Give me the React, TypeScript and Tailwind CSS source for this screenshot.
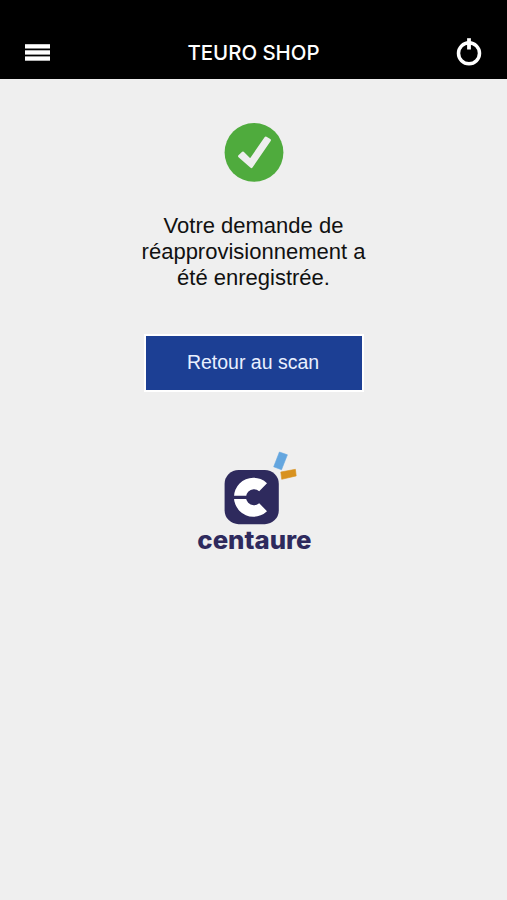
const MenuIcon: React.FC = () => (
  <svg viewBox="0 0 25 17" className="w-[25px] h-[17px]" fill="#fff">
    <rect x="0" y="0.2" width="25" height="4.3" />
    <rect x="0" y="6.3" width="25" height="4.3" />
    <rect x="0" y="12.4" width="25" height="4.3" />
  </svg>
);

const PowerIcon: React.FC = () => (
  <svg viewBox="0 0 26 28" className="w-[26px] h-7" fill="none" stroke="#fff">
    <circle cx="13" cy="15.3" r="10.5" strokeWidth="3.5" />
    <path d="M13 .2v11.3" strokeWidth="3.8" />
  </svg>
);

const SuccessIcon: React.FC = () => (
  <svg viewBox="0 0 60 60" className="w-[60px] h-[60px]">
    <circle cx="30" cy="30.4" r="29.4" fill="#4fab3d" />
    <path
      d="M15.4 34.2L18.8 30.8L26.3 38.2L41.8 15.8L45.6 18.2L27.4 44.8Z"
      fill="#eee"
      stroke="#eee"
      strokeWidth="2.6"
      strokeLinejoin="round"
    />
  </svg>
);

const CentaureLogo: React.FC = () => (
  <svg viewBox="189.5 448 130 106" className="w-[130px] h-[106px] translate-x-[0.5px]">
    <rect x="224.6" y="470" width="54.2" height="54.2" rx="14" fill="#2e2a5d" />
    <path
      d="M267 483.2A19.5 19.5 0 1 0 267 511.2L259.2 503.3A8 8 0 1 1 259.2 491.2Z"
      fill="#fff"
    />
    <path d="M234 497.3h14" stroke="#2e2a5d" strokeWidth="3.2" />
    <path d="M279.4 452l8 2.8-5.9 14.9-7.8-2.9z" fill="#64a6df" stroke="#64a6df" strokeWidth=".6" />
    <path d="M280.8 472l14.6-2.7.8 6.6-14.5 3.4z" fill="#d8921f" stroke="#d8921f" strokeWidth=".6" />
    <text
      x="197.3"
      y="548.6"
      textLength="114.3"
      lengthAdjust="spacingAndGlyphs"
      fill="#2e2a5d"
      className="font-['Inter',sans-serif] font-extrabold text-[24.5px]"
    >
      centaure
    </text>
  </svg>
);

const App: React.FC = () => {
  return (
    <div className="min-h-screen bg-[#efefef] font-['Liberation_Sans',Arial,sans-serif]">
      <header className="flex h-[79px] items-end justify-between bg-black pr-[25px] pl-[25px] pb-[13px]">
        <button aria-label="Menu" className="flex w-[26px] pb-[5px]">
          <MenuIcon />
        </button>
        <h1 className="-mb-px font-['Inter',sans-serif] text-[20.4px] leading-7 font-medium text-white">TEURO SHOP</h1>
        <button aria-label="Déconnexion" className="flex">
          <PowerIcon />
        </button>
      </header>

      <main className="flex flex-col items-center pt-[43px]">
        <SuccessIcon />
        <p className="mt-[31px] w-[240px] text-center text-[22px] leading-[26px] text-[#111]">
          Votre demande de réapprovisionnement a été enregistrée.
        </p>
        <button className="mt-[43px] ml-px h-[58px] w-[220px] border-2 border-white bg-[#1c3f94] pr-0.5 text-[19.5px] text-[#eaf0ff]">
          Retour au scan
        </button>
        <div className="mt-14">
          <CentaureLogo />
        </div>
      </main>
    </div>
  );
};

export default App;
